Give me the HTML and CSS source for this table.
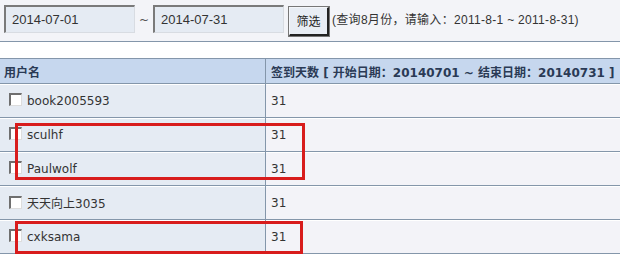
FILE: index.html
```html
<!DOCTYPE html>
<html>
<head>
<meta charset="utf-8">
<link rel="stylesheet" href="styles.css">
</head>
<body>
<div class="toolbar">
  <span class="field">2014-07-01</span>
  <span class="tilde">~</span>
  <span class="field">2014-07-31</span>
  <span class="btn">筛选</span>
  <span class="hint">(查询8月份，请输入：2011-8-1 ~ 2011-8-31)</span>
</div>
<div class="wrap">
<table class="grid">
  <tr class="head">
    <th class="c1">用户名</th>
    <th class="c2">签到天数 [ 开始日期：20140701 ~ 结束日期：20140731 ]</th>
  </tr>
  <tr><td class="c1"><span class="cb"></span><span class="name">book2005593</span></td><td class="c2">31</td></tr>
  <tr><td class="c1"><span class="cb"></span><span class="name">sculhf</span></td><td class="c2">31</td></tr>
  <tr><td class="c1"><span class="cb"></span><span class="name">Paulwolf</span></td><td class="c2">31</td></tr>
  <tr><td class="c1"><span class="cb"></span><span class="name">天天向上3035</span></td><td class="c2">31</td></tr>
  <tr><td class="c1"><span class="cb"></span><span class="name">cxksama</span></td><td class="c2">31</td></tr>
</table>
<div class="mark mark1"></div>
<div class="mark mark2"></div>
</div>
</body>
</html>
```
FILE: styles.css
```css
html, body {
  margin: 0;
  padding: 0;
  background: #ffffff;
  font-family: "DejaVu Sans", "Liberation Sans", "Noto Sans CJK SC", sans-serif;
  font-size: 12px;
  color: #333;
  overflow: hidden;
}
.toolbar {
  height: 42px;
  box-sizing: border-box;
  background: #f3f4f8;
  border-bottom: 1px solid #8496aa;
  display: flex;
  align-items: flex-start;
  padding: 5px 0 0 4px;
}
.field {
  width: 131px;
  height: 28px;
  box-sizing: border-box;
  background: #e5ebf3;
  border-top: 2px solid #7a7a7a;
  border-left: 2px solid #7a7a7a;
  border-right: 1px solid #d8dce2;
  border-bottom: 1px solid #d8dce2;
  padding-left: 6px;
  line-height: 25px;
  font-family: "Liberation Sans", "Noto Sans CJK SC", sans-serif;
  font-size: 13px;
  color: #333;
}
.tilde {
  width: 18px;
  text-align: center;
  line-height: 30px;
  color: #555;
  font-size: 12px;
}
.btn {
  margin-left: 5px;
  margin-top: 2px;
  width: 40px;
  height: 29px;
  box-sizing: border-box;
  background: #e8edf4;
  border-top: 1px solid #f4f6fa;
  border-left: 1px solid #f4f6fa;
  border-right: 2px solid #222;
  border-bottom: 2px solid #222;
  outline: 1px solid #777;
  text-align: center;
  line-height: 25px;
  font-family: "Noto Sans CJK SC", sans-serif;
  font-size: 12px;
  color: #222;
}
.hint {
  margin-left: 3px;
  line-height: 30px;
  font-family: "Liberation Sans", "Noto Sans CJK SC", sans-serif;
  font-size: 12px;
  letter-spacing: 0.3px;
  color: #333;
}
.wrap {
  position: relative;
  margin-top: 16px;
}
.grid {
  border-collapse: collapse;
  width: 640px;
  table-layout: fixed;
}
.grid th, .grid td {
  border-top: 1px solid #8496aa;
  border-bottom: 1px solid #8496aa;
  padding: 0;
  text-align: left;
  white-space: nowrap;
  overflow: hidden;
}
.grid .c1 {
  width: 261px;
  border-right: 1px solid #8496aa;
  padding-left: 4px;
}
.grid .c2 {
  padding-left: 5px;
}
.head th {
  height: 24px;
  background: #c6d7ee;
  font-weight: bold;
  font-size: 12px;
  color: #2a3a55;
  font-family: "DejaVu Sans", "Noto Sans CJK SC", sans-serif;
}
.grid td {
  height: 33px;
  box-shadow: inset 0 1px 0 #ffffff;
}
.grid td.c1 {
  background: #e5ebf3;
  padding-left: 9px;
}
.grid td.c2 {
  background: #f3f3f8;
  color: #333;
}
.cb {
  display: inline-block;
  width: 13px;
  height: 13px;
  box-sizing: border-box;
  background: #fff;
  border-top: 2px solid #6f6f6f;
  border-left: 2px solid #6f6f6f;
  border-right: 1px solid #dddddd;
  border-bottom: 1px solid #dddddd;
  vertical-align: -1px;
  margin-right: 5px;
}
.name {
  color: #333;
}
.mark {
  position: absolute;
  border: 3px solid #d81c1c;
  box-sizing: border-box;
}
.mark1 {
  left: 15px;
  top: 65px;
  width: 290px;
  height: 57px;
}
.mark2 {
  left: 15px;
  top: 163px;
  width: 288px;
  height: 33px;
}
```
